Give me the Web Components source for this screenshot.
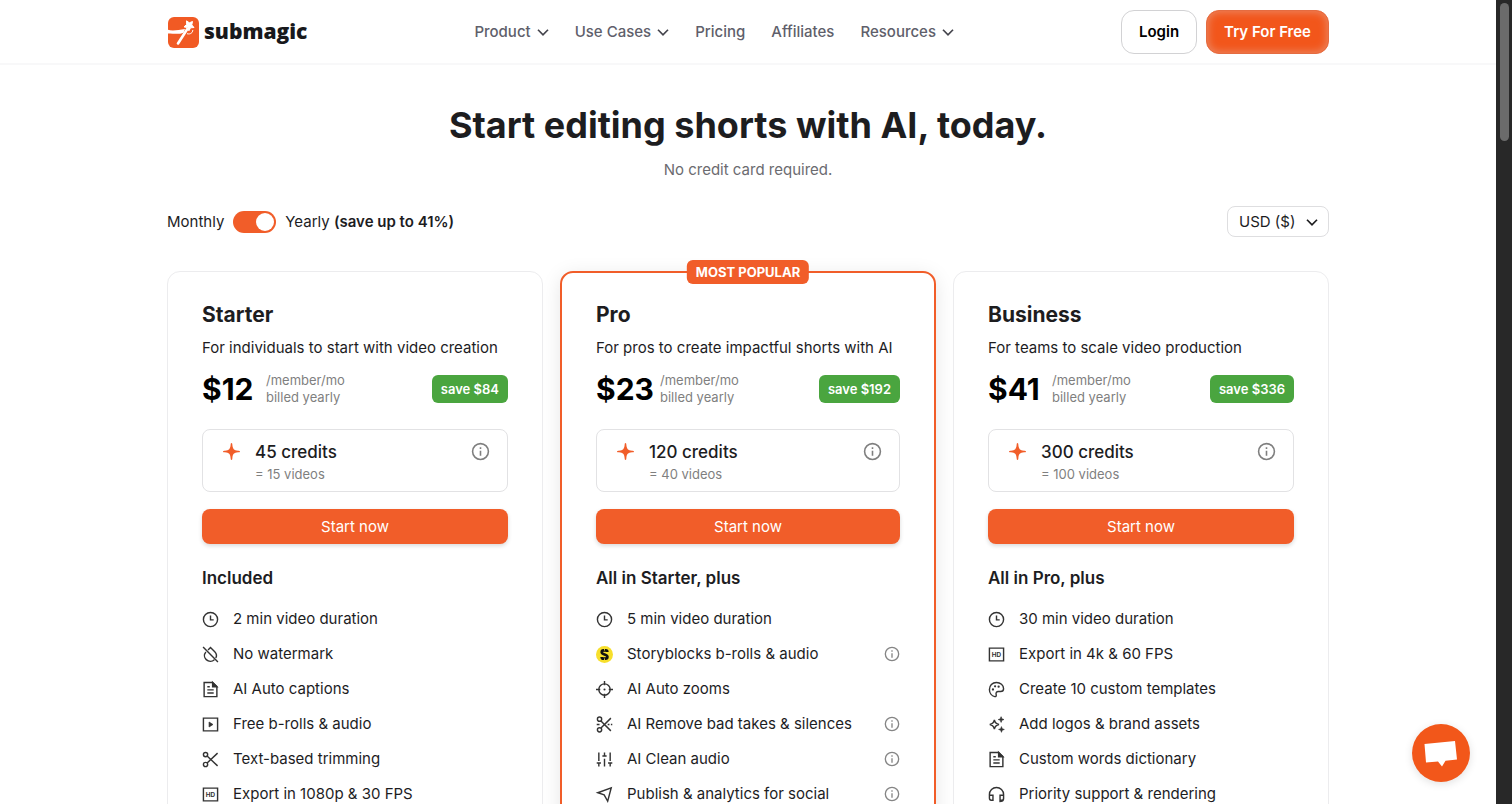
<!DOCTYPE html>
<html lang="en">
<head>
  <meta charset="UTF-8">
  <meta name="viewport" content="width=device-width, initial-scale=1">
  <title>Submagic Pricing</title>
  <style>
    body {
      margin: 0;
      background: white;
      color: #1d1d1f;
      font-family: Inter, sans-serif;
      font-size: 15px;
      line-height: 24px;
      --brand: #f15d29;
      --muted: #7f7f7f;
    }
  </style>
</head>
<body>
  <pricing-page></pricing-page>

  <script>
    const ICONS = {
      chevron: '<path d="M2 7.500l10 10 10-10" stroke-width="3.400"/>',
      clock: '<circle cx="12" cy="12" r="10"/><path d="M12 6.5V12.5H16.5"/>',
      info: '<circle cx="12" cy="12" r="10"/><path d="M12 11v6.5M12 6.5v2.2"/>',
      spark: '<path fill="currentColor" stroke="none" d="M12 0c.9 0 1.1 1 1.200 2.400.5 5.800 2.200 8 8 8.400 1.700.1 2.800.3 2.800 1.200s-1.100 1.100-2.800 1.200c-5.800.4-7.500 2.600-8 8.400C13.100 23 12.900 24 12 24s-1.100-1-1.200-2.400c-.5-5.800-2.200-8-8-8.400C1.100 13.100 0 12.900 0 12s1.100-1.100 2.800-1.200c5.800-.4 7.500-2.600 8-8.400C10.900 1 11.100 0 12 0z"/>',
      nodrop: '<path d="M1.500 1.500l21 21M8.500 5.500L12 2l6 6c2.500 2.500 3 6 1.500 9M5.500 8.500c-3 3.500-2.500 8 .5 10.700 3.300 3 8.300 3 11.500.2"/>',
      file: '<path d="M3 2h12l6 6v14H3z"/><path d="M15 2v6h6z" fill="currentColor"/><path d="M7.500 8h3.500M7.500 12.500h9M7.500 17h9"/>',
      play: '<path d="M2 3h20v18H2z"/><path d="M10 8.500v7l5.500-3.500z" fill="currentColor" stroke-width="1"/>',
      scissors: '<circle cx="5" cy="5" r="3"/><circle cx="5" cy="19" r="3"/><path d="M7.200 7.200L22 21M7.200 16.800L22 3"/>',
      cuts: '<circle cx="5" cy="4.500" r="3"/><circle cx="5" cy="19.500" r="3"/><path d="M7 7l14 14M7 17L21 3M1 12h4M16.500 12h2.500M21 12h2"/>',
      hd: '<path d="M2 3h20v18H2z"/><text x="12" y="15" text-anchor="middle" font-family="Inter, sans-serif" font-size="9" font-weight="700" fill="currentColor" stroke="none">HD</text>',
      target: '<circle cx="12" cy="12" r="8"/><path d="M12 0v6M12 18v6M0 12h6M18 12h6"/><circle cx="12" cy="12" r="1.500" fill="currentColor" stroke="none"/>',
      sliders: '<path d="M4 2v12M1 17h6M4 18v4M12 2v4M9 7h6M12 11v11M20 2v12M17 17h6M20 18v4"/>',
      send: '<path d="M2.500 9.500L21.500 2.500l-5 19-5-9z"/>',
      palette: '<path d="M12 2C6 2 2 6.400 2 12c0 5 3.200 9.200 7.500 10 1.900.2 2.500-1.300 2-3-.7-2.500.6-4.200 3-4.200h3.200c2.500 0 4.300-1.500 4.300-4C22 5.700 17.500 2 12 2z"/><g fill="currentColor" stroke="none"><circle cx="7" cy="12" r="1.600"/><circle cx="10" cy="7.500" r="1.600"/><circle cx="15" cy="8" r="1.600"/></g>',
      sparkles: '<path d="M9 5.500c.8 4 2.500 5.700 6.500 6.500-4 .8-5.700 2.500-6.500 6.500-.8-4-2.500-5.700-6.500-6.500 4-.8 5.700-2.500 6.500-6.500z"/><path fill="currentColor" stroke-width="1" d="M18.500 1l1 3 3 1-3 1-1 3-1-3-3-1 3-1zM19 15l1 3 3 1-3 1-1 3-1-3-3-1 3-1z"/>',
      headset: '<path d="M2 15v-3a10 10 0 0 1 20 0v6c0 3-2 4-6 4M2 13h5v7H4.500C3 20 2 19 2 17zM22 13h-5v7h3c1.400 0 2-1 2-3z"/>',
      storyblocks: '<circle cx="12" cy="12" r="12" fill="#f7df2c" stroke="none"/><path d="M16 8.500c0-1.700-1-2.300-2.400-2.300h-3c-1.600 0-2.500.8-2.500 2.600 0 3.700 8 2.700 8 6.500 0 1.800-1 2.600-2.700 2.600h-3c-1.500 0-2.400-.8-2.400-2.500" stroke="#111" stroke-width="3.800"/><path d="M12 3.500v3M12 17.500v3" stroke="#f7df2c" stroke-width="1.200"/>'
    };

    class UiIcon extends HTMLElement {
      connectedCallback() {
        this.attachShadow({ mode: 'open' });
        this.shadowRoot.innerHTML = `
          <style>
            :host {
              display: block;
              flex: none;
              width: var(--icon-size, 17px);
              height: var(--icon-size, 17px);
            }
            svg {
              display: block;
              width: 100%;
              height: 100%;
              overflow: visible;
            }
          </style>
          <svg viewBox="0 0 24 24" fill="none" stroke="currentColor" stroke-width="2" aria-hidden="true">${ICONS[this.getAttribute('name')]}</svg>
        `;
      }
    }

    class BrandLogo extends HTMLElement {
      connectedCallback() {
        this.attachShadow({ mode: 'open' });
        this.shadowRoot.innerHTML = `
          <style>
            :host {
              display: block;
            }
            a {
              display: flex;
              align-items: center;
              gap: 5px;
              color: #18181b;
              text-decoration: none;
              font: 800 21px/28px "Open Sans", sans-serif;
            }
            svg {
              width: 32px;
              height: 32px;
            }
            span {
              padding-bottom: 1px;
            }
          </style>
          <a href="#">
            <svg viewBox="0 0 32 32" aria-hidden="true">
              <rect x="1" y="1" width="31" height="31" rx="6" fill="#f15a24"/>
              <path d="M0 13.500c6 2 11 .3 18-.5l-1.500 3.700c-5 2-8.500.8-16.500.8z" fill="white"/>
              <path d="M20.300 13L11 27.500" stroke="white" stroke-width="2.600" stroke-linecap="round"/>
              <path d="M20 17.700c3.500.9 5.700-.9 5.800-3.700" fill="none" stroke="white" stroke-width="1"/>
              <path d="M19.600 4.800l2.700 2 3.200-1.300-.7 3.400 2.200 2.600-3.400.3-1.700 3-1.400-3.200-3.500-.7 2.600-2.400z" fill="white" stroke="white" stroke-linejoin="round"/>
            </svg>
            <span>submagic</span>
          </a>
        `;
      }
    }

    class NavItem extends HTMLElement {
      connectedCallback() {
        this.attachShadow({ mode: 'open' });
        this.shadowRoot.innerHTML = `
          <style>
            a {
              display: flex;
              align-items: center;
              gap: 6px;
              color: #5f5f6b;
              font-weight: 500;
              text-decoration: none;
              white-space: nowrap;
            }
            a:hover {
              color: var(--brand);
            }
            ui-icon {
              --icon-size: 12px;
              color: #45454d;
            }
          </style>
          <a href="#"><slot></slot>${this.hasAttribute('menu') ? '<ui-icon name="chevron"></ui-icon>' : ''}</a>
        `;
      }
    }

    class SiteHeader extends HTMLElement {
      connectedCallback() {
        this.attachShadow({ mode: 'open' });
        this.shadowRoot.innerHTML = `
          <style>
            :host {
              display: block;
              position: sticky;
              top: 0;
              z-index: 10;
              background: white;
              border-bottom: 2px solid #f8f8f9;
            }
            .bar {
              display: flex;
              align-items: center;
              justify-content: space-between;
              max-width: 1162px;
              height: 63px;
              margin: 0 auto;
            }
            nav {
              display: flex;
              gap: 26px;
            }
            .actions {
              display: flex;
              gap: 9px;
            }
            .actions a {
              box-sizing: border-box;
              padding: 9px 17px;
              border: 1px solid #d2d2d4;
              border-radius: 13px;
              color: black;
              font-weight: 600;
              text-decoration: none;
            }
            .actions .primary {
              background: #f2561b;
              border: 1px solid #e56c41;
              box-shadow: inset 0 0 9px 1px #eb8966;
              color: white;
            }
          </style>
          <div class="bar">
            <brand-logo></brand-logo>
            <nav>
              <nav-item menu>Product</nav-item>
              <nav-item menu>Use Cases</nav-item>
              <nav-item>Pricing</nav-item>
              <nav-item>Affiliates</nav-item>
              <nav-item menu>Resources</nav-item>
            </nav>
            <div class="actions">
              <a href="#">Login</a>
              <a href="#" class="primary">Try For Free</a>
            </div>
          </div>
        `;
      }
    }

    class BillingToggle extends HTMLElement {
      connectedCallback() {
        this.attachShadow({ mode: 'open' });
        this.shadowRoot.innerHTML = `
          <style>
            label {
              display: flex;
              align-items: center;
              gap: 9px;
              cursor: pointer;
            }
            input {
              appearance: none;
              display: flex;
              box-sizing: border-box;
              width: 43px;
              height: 22px;
              margin: 0;
              padding: 2px;
              border-radius: 11px;
              background: #c9c9cc;
            }
            input::before {
              content: "";
              width: 18px;
              height: 18px;
              border-radius: 50%;
              background: white;
            }
            input:checked {
              justify-content: flex-end;
              background: var(--brand);
            }
            strong {
              font-weight: 600;
            }
          </style>
          <label>
            <span>Monthly</span>
            <input type="checkbox" role="switch" checked>
            <span>Yearly <strong>(save up to 41%)</strong></span>
          </label>
        `;
      }
    }

    class CurrencySelect extends HTMLElement {
      connectedCallback() {
        this.attachShadow({ mode: 'open' });
        this.shadowRoot.innerHTML = `
          <style>
            :host {
              display: grid;
              align-items: center;
            }
            select, ui-icon {
              grid-area: 1 / 1;
            }
            select {
              appearance: none;
              height: 31px;
              padding: 0 32px 0 11px;
              border: 1px solid #dedee0;
              border-radius: 8px;
              background: white;
              color: inherit;
              font: inherit;
            }
            ui-icon {
              --icon-size: 12px;
              justify-self: end;
              margin-right: 11px;
              pointer-events: none;
            }
          </style>
          <select aria-label="Currency">
            <option>USD ($)</option>
          </select>
          <ui-icon name="chevron"></ui-icon>
        `;
      }
    }

    class PlanFeature extends HTMLElement {
      connectedCallback() {
        this.attachShadow({ mode: 'open' });
        this.shadowRoot.innerHTML = `
          <style>
            :host {
              display: flex;
              align-items: center;
              gap: 14px;
              white-space: nowrap;
            }
            ui-icon {
              color: #333;
            }
            .text {
              flex: 1;
            }
            .info {
              --icon-size: 16px;
              color: #858585;
            }
          </style>
          <ui-icon name="${this.getAttribute('icon')}"></ui-icon>
          <span class="text"><slot></slot></span>
          ${this.hasAttribute('info') ? '<ui-icon class="info" name="info"></ui-icon>' : ''}
        `;
      }
    }

    class PlanCard extends HTMLElement {
      connectedCallback() {
        const get = (name) => this.getAttribute(name);
        this.attachShadow({ mode: 'open' });
        this.shadowRoot.innerHTML = `
          <style>
            :host {
              display: block;
              position: relative;
              box-sizing: border-box;
              padding: 28px 34px 40px;
              border: 1px solid #ececee;
              border-radius: 13px;
              background: white;
            }
            :host([popular]) {
              padding: 27px 34px 39px;
              border: 2px solid var(--brand);
              box-shadow: 0 4px 20px rgba(0, 0, 0, 0.1);
            }
            .ribbon {
              position: absolute;
              top: -13px;
              left: 50%;
              transform: translateX(-50%);
              padding: 0 9px;
              border-radius: 6px;
              background: var(--brand);
              color: white;
              font-size: 13px;
              font-weight: 700;
              white-space: nowrap;
            }
            h2 {
              margin: 0 0 6px;
              font-size: 21px;
              font-weight: 700;
              line-height: 30px;
            }
            p {
              margin: 0;
            }
            .price {
              display: flex;
              align-items: center;
              gap: 6px;
              height: 36px;
              margin: 11px 0 22px;
            }
            .amount {
              min-width: 58px;
              color: black;
              font-size: 30px;
              font-weight: 700;
            }
            .term {
              flex: 1;
              color: var(--muted);
              font-size: 13px;
              line-height: 17px;
            }
            .save {
              padding: 2px 9px;
              border-radius: 6px;
              background: #4aa53f;
              color: white;
              font-size: 13px;
              font-weight: 600;
            }
            .credits {
              display: flex;
              gap: 15px;
              padding: 10px 17px 7px 20px;
              border: 1px solid #e2e2e4;
              border-radius: 8px;
            }
            .credits ui-icon {
              --icon-size: 19px;
              margin-top: 2px;
              color: var(--muted);
            }
            .credits .spark {
              --icon-size: 17px;
              margin-top: 3px;
              color: var(--brand);
            }
            .credits div {
              flex: 1;
              font-size: 17px;
              font-weight: 500;
            }
            small {
              display: block;
              color: var(--muted);
              font-size: 13px;
              font-weight: 400;
              line-height: 20px;
            }
            button {
              width: 100%;
              height: 35px;
              margin: 17px 0 22px;
              border: 0;
              border-radius: 8px;
              background: var(--brand);
              box-shadow: 0 2px 4px rgba(0, 0, 0, 0.15);
              color: white;
              font: inherit;
              cursor: pointer;
            }
            h3 {
              margin: 0 0 17px;
              font-size: 17px;
              font-weight: 600;
            }
            .features {
              display: grid;
              gap: 11px;
            }
          </style>
          ${this.hasAttribute('popular') ? '<span class="ribbon">MOST POPULAR</span>' : ''}
          <h2>${get('name')}</h2>
          <p>${get('summary')}</p>
          <div class="price">
            <span class="amount">${get('price')}</span>
            <span class="term">/member/mo<br>billed yearly</span>
            <span class="save">save ${get('save')}</span>
          </div>
          <div class="credits">
            <ui-icon class="spark" name="spark"></ui-icon>
            <div>${get('credits')} credits<small>= ${get('videos')} videos</small></div>
            <ui-icon name="info"></ui-icon>
          </div>
          <button type="button">Start now</button>
          <h3>${get('heading')}</h3>
          <div class="features"><slot></slot></div>
        `;
      }
    }

    class ChatLauncher extends HTMLElement {
      connectedCallback() {
        this.attachShadow({ mode: 'open' });
        this.shadowRoot.innerHTML = `
          <style>
            :host {
              position: fixed;
              right: 42px;
              bottom: 22px;
              z-index: 20;
            }
            button {
              display: block;
              width: 58px;
              height: 58px;
              padding: 0;
              border: 0;
              border-radius: 50%;
              background: #f2571a;
              box-shadow: 0 2px 8px rgba(0, 0, 0, 0.12);
              cursor: pointer;
            }
            svg {
              display: block;
            }
          </style>
          <button type="button" aria-label="Open chat">
            <svg viewBox="0 0 58 58" aria-hidden="true">
              <path d="M12.500 20L43 17l2 18.500-11.500 1.200L30 42.500l-4-5-12 1z" fill="white"/>
            </svg>
          </button>
        `;
      }
    }

    class ScrollRail extends HTMLElement {
      connectedCallback() {
        this.attachShadow({ mode: 'open' });
        this.shadowRoot.innerHTML = `
          <style>
            :host {
              display: block;
              box-sizing: border-box;
              padding: 3px 3px 3px 4px;
              background: #282828;
            }
            div {
              height: 138px;
              border-radius: 5px;
              background: #6b6b6b;
            }
          </style>
          <div></div>
        `;
      }
    }

    class PricingPage extends HTMLElement {
      connectedCallback() {
        this.attachShadow({ mode: 'open' });
        this.shadowRoot.innerHTML = `
          <style>
            :host {
              display: grid;
              grid-template-columns: minmax(0, 1fr) 16px;
              height: 100vh;
            }
            .view {
              overflow-y: auto;
              scrollbar-width: none;
            }
            main {
              max-width: 1162px;
              margin: 0 auto;
              padding: 36px 0 60px;
            }
            h1 {
              margin: 0;
              font-size: 36px;
              font-weight: 700;
              line-height: 48px;
              text-align: center;
            }
            .note {
              margin: 9px 0 24px;
              color: #6b6b70;
              text-align: center;
            }
            .controls {
              display: flex;
              align-items: center;
              justify-content: space-between;
              margin-bottom: 34px;
            }
            .plans {
              display: grid;
              grid-template-columns: repeat(auto-fit, minmax(340px, 1fr));
              gap: 17px;
            }
          </style>
          <div class="view">
            <site-header></site-header>
            <main>
              <h1>Start editing shorts with AI, today.</h1>
              <p class="note">No credit card required.</p>
              <div class="controls">
                <billing-toggle></billing-toggle>
                <currency-select></currency-select>
              </div>
              <div class="plans">
                <plan-card name="Starter" summary="For individuals to start with video creation" price="$12" save="$84" credits="45" videos="15" heading="Included">
                  <plan-feature icon="clock">2 min video duration</plan-feature>
                  <plan-feature icon="nodrop">No watermark</plan-feature>
                  <plan-feature icon="file">AI Auto captions</plan-feature>
                  <plan-feature icon="play">Free b-rolls &amp; audio</plan-feature>
                  <plan-feature icon="scissors">Text-based trimming</plan-feature>
                  <plan-feature icon="hd">Export in 1080p &amp; 30 FPS</plan-feature>
                </plan-card>
                <plan-card popular name="Pro" summary="For pros to create impactful shorts with AI" price="$23" save="$192" credits="120" videos="40" heading="All in Starter, plus">
                  <plan-feature icon="clock">5 min video duration</plan-feature>
                  <plan-feature icon="storyblocks" info>Storyblocks b-rolls &amp; audio</plan-feature>
                  <plan-feature icon="target">AI Auto zooms</plan-feature>
                  <plan-feature icon="cuts" info>AI Remove bad takes &amp; silences</plan-feature>
                  <plan-feature icon="sliders" info>AI Clean audio</plan-feature>
                  <plan-feature icon="send" info>Publish &amp; analytics for social</plan-feature>
                </plan-card>
                <plan-card name="Business" summary="For teams to scale video production" price="$41" save="$336" credits="300" videos="100" heading="All in Pro, plus">
                  <plan-feature icon="clock">30 min video duration</plan-feature>
                  <plan-feature icon="hd">Export in 4k &amp; 60 FPS</plan-feature>
                  <plan-feature icon="palette">Create 10 custom templates</plan-feature>
                  <plan-feature icon="sparkles">Add logos &amp; brand assets</plan-feature>
                  <plan-feature icon="file">Custom words dictionary</plan-feature>
                  <plan-feature icon="headset">Priority support &amp; rendering</plan-feature>
                </plan-card>
              </div>
            </main>
          </div>
          <scroll-rail></scroll-rail>
          <chat-launcher></chat-launcher>
        `;
      }
    }

    customElements.define('ui-icon', UiIcon);
    customElements.define('brand-logo', BrandLogo);
    customElements.define('nav-item', NavItem);
    customElements.define('site-header', SiteHeader);
    customElements.define('billing-toggle', BillingToggle);
    customElements.define('currency-select', CurrencySelect);
    customElements.define('plan-feature', PlanFeature);
    customElements.define('plan-card', PlanCard);
    customElements.define('chat-launcher', ChatLauncher);
    customElements.define('scroll-rail', ScrollRail);
    customElements.define('pricing-page', PricingPage);
  </script>
</body>
</html>
